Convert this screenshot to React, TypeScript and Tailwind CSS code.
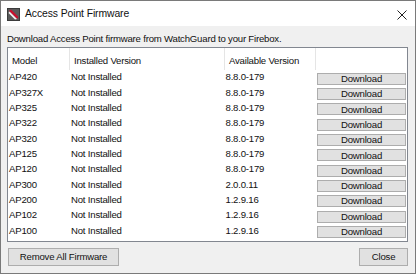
import React from 'react';

const rows: [string, string, string][] = [
  ['AP420', 'Not Installed', '8.8.0-179'],
  ['AP327X', 'Not Installed', '8.8.0-179'],
  ['AP325', 'Not Installed', '8.8.0-179'],
  ['AP322', 'Not Installed', '8.8.0-179'],
  ['AP320', 'Not Installed', '8.8.0-179'],
  ['AP125', 'Not Installed', '8.8.0-179'],
  ['AP120', 'Not Installed', '8.8.0-179'],
  ['AP300', 'Not Installed', '2.0.0.11'],
  ['AP200', 'Not Installed', '1.2.9.16'],
  ['AP102', 'Not Installed', '1.2.9.16'],
  ['AP100', 'Not Installed', '1.2.9.16'],
];

const AppIcon = () => (
  <svg width="13" height="13" viewBox="0 0 13 13">
    <rect x="0" y="0" width="13" height="13" fill="#3b3b3b" />
    <rect x="1" y="1" width="11" height="11" fill="#5a5a5a" />
    <path d="M2 3 L4 1.5 L11.5 9 L10 11 Z" fill="#c8102e" />
    <path d="M1.5 5 L2.5 3.5 L10 11 L8 11.5 Z" fill="#f2f2f2" />
  </svg>
);

const App: React.FC = () => {
  return (
    <div className="w-[416px] h-[274px] border border-[#7a7a7a] bg-[#f0f0f0] flex flex-col font-['Liberation_Sans',Arial,sans-serif] text-[#111] overflow-hidden">
      <div className="h-[25px] bg-white flex items-center shrink-0">
        <div className="ml-[6px] mt-[1px]">
          <AppIcon />
        </div>
        <span className="ml-[5px] text-[10.4px] tracking-[-0.1px] mt-[1px]">Access Point Firmware</span>
        <svg className="ml-auto mr-[8px] mt-[2px]" width="10" height="10" viewBox="0 0 10 10">
          <path d="M0.5 0.5 L9.5 9.5 M9.5 0.5 L0.5 9.5" stroke="#222" strokeWidth="1" />
        </svg>
      </div>

      <div className="flex-1 flex flex-col pl-[6px] pr-[7px] text-[9.6px] tracking-[-0.2px]">
        <p className="h-[21px] pt-[5px] flex items-center">
          Download Access Point firmware from WatchGuard to your Firebox.
        </p>

        <div className="h-[195px] border border-[#828790] bg-white flex flex-col">
          <div className="h-[22px] grid grid-cols-[62px_155px_91px_91px] shrink-0">
            <div className="border-r border-[#e5e5e5] pl-[4px] pt-[4px] flex items-center">Model</div>
            <div className="border-r border-[#e5e5e5] pl-[4px] pt-[4px] flex items-center">Installed Version</div>
            <div className="border-r border-[#e5e5e5] pl-[4px] pt-[4px] flex items-center">Available Version</div>
            <div />
          </div>
          {rows.map(([model, installed, available]) => (
            <div key={model} className="h-[15.33px] grid grid-cols-[62px_155px_91px_91px] shrink-0">
              <div className="pl-[1px] flex items-center">{model}</div>
              <div className="pl-[1px] flex items-center">{installed}</div>
              <div className="pl-[0.5px] flex items-center">{available}</div>
              <div className="pl-[1px] flex items-center">
                <button className="w-[89px] h-[12px] mt-[2px] border border-[#adadad] bg-[#e1e1e1] flex items-center justify-center leading-none">
                  Download
                </button>
              </div>
            </div>
          ))}
        </div>

        <div className="mt-[6px] flex items-center justify-between">
          <button className="ml-[1px] w-[111px] h-[18px] border border-[#adadad] bg-[#e1e1e1] flex items-center justify-center">
            Remove All Firmware
          </button>
          <button className="w-[49px] h-[18px] border border-[#adadad] bg-[#e1e1e1] flex items-center justify-center">
            Close
          </button>
        </div>
      </div>
    </div>
  );
};

export default App;
